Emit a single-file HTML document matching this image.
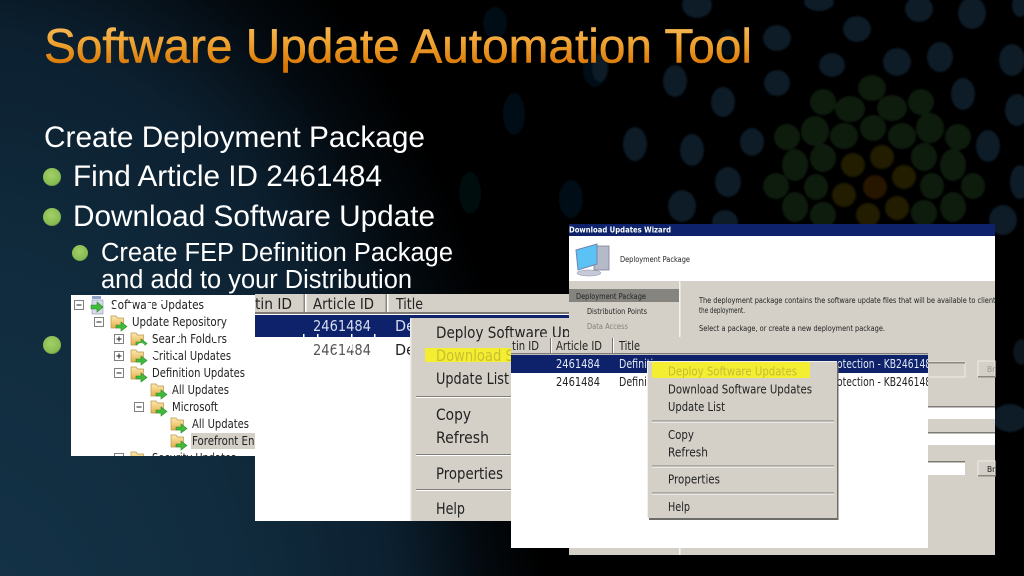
<!DOCTYPE html>
<html><head><meta charset="utf-8"><title>Software Update Automation Tool</title>
<style>
html,body{margin:0;padding:0;background:#000;width:1024px;height:576px;overflow:hidden}
svg{display:block}
.h{font-family:"Liberation Sans",Arial,sans-serif;fill:#fff}
.s{font-family:"DejaVu Sans","Liberation Sans",sans-serif;fill:#222}
</style></head><body>
<svg xmlns="http://www.w3.org/2000/svg" width="1024" height="576" viewBox="0 0 1024 576">
<defs>
<radialGradient id="bg" gradientUnits="userSpaceOnUse" cx="0" cy="0" r="1" gradientTransform="translate(-30 700) scale(580 900)">
<stop offset="0" stop-color="#153449"/><stop offset=".5" stop-color="#102b3d"/><stop offset=".74" stop-color="#0c2030"/><stop offset=".8" stop-color="#091824"/><stop offset=".9" stop-color="#03090e"/><stop offset="1" stop-color="#000"/>
</radialGradient>
<linearGradient id="tg" gradientUnits="userSpaceOnUse" x1="0" y1="24" x2="0" y2="66">
<stop offset="0" stop-color="#f8bb5c"/><stop offset=".5" stop-color="#ee9f2c"/><stop offset="1" stop-color="#d87604"/>
</linearGradient>
<radialGradient id="bl" cx=".45" cy=".4" r=".65"><stop offset="0" stop-color="#a5cf68"/><stop offset=".8" stop-color="#86bb52"/><stop offset="1" stop-color="#5f8c38"/></radialGradient>
<filter id="b1" x="-20%" y="-20%" width="140%" height="140%"><feGaussianBlur stdDeviation="1"/></filter>
<filter id="b0" x="0" y="0" width="100%" height="100%"><feGaussianBlur stdDeviation=".35"/></filter>
<linearGradient id="fo" x1="0" y1="0" x2="0" y2="1"><stop offset="0" stop-color="#fbe9ae"/><stop offset="1" stop-color="#e6b04c"/></linearGradient>
<g id="f">
<path d="M1 3h5l1.500 2h6v10H1z" fill="url(#fo)" stroke="#b9954c" stroke-width=".7"/>
<path d="M6 12h5V9l6 4.500-6 4.500v-3H6z" fill="#3fbb3a" stroke="#2b8a2a" stroke-width=".6"/>
</g>
<g id="m"><rect x="-4.500" y="-4.500" width="9" height="9" fill="#fff" stroke="#808080"/><path d="M-2.500 0h5" stroke="#222"/></g>
<g id="p"><rect x="-4.500" y="-4.500" width="9" height="9" fill="#fff" stroke="#808080"/><path d="M-2.500 0h5M0-2.500v5" stroke="#222"/></g>
</defs>
<rect width="1024" height="576" fill="url(#bg)"/>
<g filter="url(#b1)">
<g fill="#050f16">
<ellipse cx="495" cy="23" rx="12" ry="16"/><ellipse cx="595" cy="70" rx="12" ry="17"/><ellipse cx="514" cy="114" rx="11" ry="21"/><ellipse cx="470" cy="193" rx="11" ry="21" fill="#030a0f"/><ellipse cx="571" cy="199" rx="12" ry="19"/>
<ellipse cx="728" cy="43" rx="10" ry="14"/>
</g>
<g fill="#091a27">
<ellipse cx="697" cy="5" rx="15" ry="13"/><ellipse cx="675" cy="81" rx="12" ry="16"/><ellipse cx="723" cy="102" rx="12" ry="15"/><ellipse cx="777" cy="83" rx="13" ry="13"/><ellipse cx="777" cy="38" rx="14" ry="13"/><ellipse cx="832" cy="65" rx="13" ry="12"/><ellipse cx="857" cy="29" rx="14" ry="13"/><ellipse cx="897" cy="62" rx="14" ry="14"/><ellipse cx="940" cy="57" rx="13" ry="15"/><ellipse cx="919" cy="9" rx="14" ry="13"/><ellipse cx="972" cy="13" rx="14" ry="16"/><ellipse cx="819" cy="2" rx="15" ry="9"/><ellipse cx="1020" cy="5" rx="8" ry="12"/><ellipse cx="1012" cy="60" rx="13" ry="16"/><ellipse cx="963" cy="94" rx="12" ry="16"/><ellipse cx="1017" cy="110" rx="12" ry="16"/><ellipse cx="635" cy="144" rx="12" ry="17"/><ellipse cx="692" cy="150" rx="12" ry="16"/><ellipse cx="752" cy="142" rx="12" ry="14"/><ellipse cx="728" cy="182" rx="13" ry="15"/><ellipse cx="682" cy="206" rx="14" ry="16"/><ellipse cx="725" cy="222" rx="13" ry="12"/><ellipse cx="988" cy="146" rx="12" ry="16"/><ellipse cx="1020" cy="182" rx="10" ry="17"/><ellipse cx="1003" cy="220" rx="14" ry="15"/><ellipse cx="600" cy="68" rx="8" ry="14"/><ellipse cx="1010" cy="418" rx="18" ry="14"/>
</g>
<ellipse cx="1022" cy="352" rx="9" ry="13" fill="#07161a"/>
<g fill="#111b0b">
<ellipse cx="872" cy="88" rx="14" ry="13"/><ellipse cx="823" cy="102" rx="13" ry="13"/><ellipse cx="921" cy="102" rx="13" ry="13"/><ellipse cx="850" cy="109" rx="15" ry="13"/><ellipse cx="892" cy="108" rx="15" ry="13"/><ellipse cx="873" cy="128" rx="13" ry="13"/><ellipse cx="844" cy="136" rx="14" ry="13"/><ellipse cx="902" cy="136" rx="14" ry="13"/><ellipse cx="815" cy="131" rx="14" ry="15"/><ellipse cx="930" cy="128" rx="14" ry="15"/><ellipse cx="787" cy="137" rx="13" ry="13"/><ellipse cx="958" cy="137" rx="13" ry="13"/><ellipse cx="823" cy="158" rx="13" ry="14"/><ellipse cx="924" cy="157" rx="13" ry="14"/><ellipse cx="795" cy="165" rx="13" ry="16"/><ellipse cx="953" cy="165" rx="13" ry="16"/><ellipse cx="776" cy="186" rx="13" ry="13"/><ellipse cx="973" cy="186" rx="12" ry="13"/><ellipse cx="816" cy="187" rx="12" ry="13"/><ellipse cx="932" cy="186" rx="12" ry="13"/><ellipse cx="795" cy="207" rx="13" ry="15"/><ellipse cx="953" cy="207" rx="13" ry="15"/><ellipse cx="823" cy="215" rx="13" ry="13"/><ellipse cx="924" cy="213" rx="13" ry="13"/>
</g>
<g fill="#231b04">
<circle cx="882" cy="157" r="12"/><circle cx="853" cy="165" r="12"/><circle cx="904" cy="177" r="12"/><circle cx="844" cy="195" r="12"/><circle cx="897" cy="208" r="12"/><circle cx="868" cy="215" r="12"/>
</g>
<circle cx="875" cy="187" r="12" fill="#251205"/>
</g>

<text class="h" x="44" y="62.500" font-size="48" textLength="708" lengthAdjust="spacingAndGlyphs" style="fill:url(#tg);stroke:url(#tg);stroke-width:.5">Software Update Automation Tool</text>
<text class="h" x="44" y="147" font-size="30" textLength="381" lengthAdjust="spacingAndGlyphs">Create Deployment Package</text>
<text class="h" x="73" y="186" font-size="30" textLength="309" lengthAdjust="spacingAndGlyphs">Find Article ID 2461484</text>
<text class="h" x="73" y="226" font-size="30" textLength="362" lengthAdjust="spacingAndGlyphs">Download Software Update</text>
<text class="h" x="101" y="261" font-size="25.500" textLength="352" lengthAdjust="spacingAndGlyphs">Create FEP Definition Package</text>
<text class="h" x="101" y="288" font-size="25.500" textLength="311" lengthAdjust="spacingAndGlyphs">and add to your Distribution</text>
<circle cx="52" cy="177" r="9" fill="url(#bl)"/><circle cx="52" cy="217" r="9" fill="url(#bl)"/><circle cx="52" cy="345" r="9" fill="url(#bl)"/><circle cx="80" cy="253" r="8" fill="url(#bl)"/>

<g filter="url(#b0)">
<!-- list 1 -->
<rect x="255" y="294" width="314" height="227" fill="#fff"/>
<rect x="255" y="294" width="314" height="18" fill="#d4d0c8"/>
<rect x="255" y="312" width="314" height="2" fill="#7d7a74"/>
<rect x="305" y="294" width="1.500" height="18" fill="#fff"/><rect x="303.500" y="294" width="1.500" height="18" fill="#8a8780"/>
<rect x="387" y="294" width="1.500" height="18" fill="#fff"/><rect x="385.500" y="294" width="1.500" height="18" fill="#8a8780"/>
<rect x="255" y="315" width="314" height="22" fill="#0a246a"/>
<text class="s" x="255" y="309" font-size="15" textLength="37" lengthAdjust="spacingAndGlyphs">tin ID</text>
<text class="s" x="313" y="309" font-size="15" textLength="61" lengthAdjust="spacingAndGlyphs">Article ID</text>
<text class="s" x="396" y="309" font-size="15" textLength="27" lengthAdjust="spacingAndGlyphs">Title</text>
<text class="s" x="313" y="331" font-size="15" textLength="58" lengthAdjust="spacingAndGlyphs" style="fill:#d6dcf0">2461484</text>
<text class="s" x="395" y="331" font-size="15" textLength="20" lengthAdjust="spacingAndGlyphs" style="fill:#d6dcf0">De</text>
<text class="s" x="313" y="355" font-size="15" textLength="58" lengthAdjust="spacingAndGlyphs" style="fill:#555">2461484</text>
<text class="s" x="395" y="355" font-size="15" textLength="20" lengthAdjust="spacingAndGlyphs">De</text>
<rect x="320" y="343" width="2" height="5" fill="#fff"/><rect x="335" y="349" width="3" height="3" fill="#fff"/><rect x="350" y="344" width="2" height="6" fill="#fff"/>
<rect x="303" y="334" width="1.500" height="4" fill="#fff"/><rect x="317" y="334" width="1.500" height="4" fill="#fff"/><rect x="351" y="334" width="1.500" height="4" fill="#fff"/><rect x="374" y="334" width="1.500" height="4" fill="#fff"/>
<!-- menu 1 -->
<rect x="410" y="318" width="159" height="203" fill="#d4d0c8"/>
<rect x="410" y="318" width="1.500" height="203" fill="#eeece8"/>
<rect x="425" y="348" width="90" height="14" fill="#f4ee30"/>
<text class="s" x="436" y="338" font-size="16" textLength="172" lengthAdjust="spacingAndGlyphs">Deploy Software Updates</text>
<text class="s" x="436" y="361" font-size="16" textLength="186" lengthAdjust="spacingAndGlyphs" style="fill:#c9bf30">Download Software Updates</text>
<text class="s" x="436" y="384" font-size="16" textLength="73" lengthAdjust="spacingAndGlyphs">Update List</text>
<rect x="416" y="396" width="153" height="1" fill="#807d77"/><rect x="416" y="397" width="153" height="1" fill="#fff"/>
<text class="s" x="436" y="420" font-size="16" textLength="35" lengthAdjust="spacingAndGlyphs">Copy</text>
<text class="s" x="436" y="443" font-size="16" textLength="53" lengthAdjust="spacingAndGlyphs">Refresh</text>
<rect x="416" y="454" width="153" height="1" fill="#807d77"/><rect x="416" y="455" width="153" height="1" fill="#fff"/>
<text class="s" x="436" y="479" font-size="16" textLength="67" lengthAdjust="spacingAndGlyphs">Properties</text>
<rect x="416" y="489" width="153" height="1" fill="#807d77"/><rect x="416" y="490" width="153" height="1" fill="#fff"/>
<text class="s" x="436" y="514" font-size="16" textLength="29" lengthAdjust="spacingAndGlyphs">Help</text>

<!-- tree -->
<rect x="71" y="295" width="184" height="161" fill="#fff"/>
<svg x="71" y="295" width="184" height="161" viewBox="71 295 184 161">
<use href="#m" x="79" y="305"/><use href="#m" x="99" y="322"/><use href="#p" x="119" y="339"/><use href="#p" x="119" y="356"/><use href="#m" x="119" y="373"/><use href="#m" x="139" y="407"/><use href="#m" x="119" y="458"/>
<rect x="92" y="296" width="9" height="3" fill="#8fa4c8"/><rect x="92" y="300" width="11" height="14" fill="#d8dcea" stroke="#8a94b0" stroke-width=".6"/>
<path d="M91 305h6v-3l6 5-6 5v-3h-6z" fill="#3fbb3a" stroke="#2b8a2a" stroke-width=".6"/>
<use href="#f" x="110" y="313"/><use href="#f" x="130" y="330"/><use href="#f" x="130" y="347"/><use href="#f" x="130" y="364"/><use href="#f" x="150" y="381"/><use href="#f" x="150" y="398"/><use href="#f" x="170" y="415"/><use href="#f" x="170" y="432"/><use href="#f" x="130" y="449"/>
<rect x="191" y="433" width="64" height="16" fill="#d4d0c8"/>
<g font-size="12">
<text class="s" x="111" y="309" textLength="93" lengthAdjust="spacingAndGlyphs">Software Updates</text>
<text class="s" x="132" y="326" textLength="95" lengthAdjust="spacingAndGlyphs">Update Repository</text>
<text class="s" x="152" y="343" textLength="75" lengthAdjust="spacingAndGlyphs">Search Folders</text>
<text class="s" x="152" y="360" textLength="79" lengthAdjust="spacingAndGlyphs">Critical Updates</text>
<text class="s" x="152" y="377" textLength="93" lengthAdjust="spacingAndGlyphs">Definition Updates</text>
<text class="s" x="172" y="394" textLength="57" lengthAdjust="spacingAndGlyphs">All Updates</text>
<text class="s" x="172" y="411" textLength="46" lengthAdjust="spacingAndGlyphs">Microsoft</text>
<text class="s" x="192" y="428" textLength="57" lengthAdjust="spacingAndGlyphs">All Updates</text>
<text class="s" x="192" y="445" textLength="95" lengthAdjust="spacingAndGlyphs">Forefront Endpoint</text>
<text class="s" x="152" y="462" textLength="84" lengthAdjust="spacingAndGlyphs">Security Updates</text>
</g>
<rect x="114" y="302" width="3" height="6" fill="#fff"/><rect x="128" y="303" width="5" height="6" fill="#fff"/><rect x="146" y="303" width="6" height="6" fill="#fff"/><rect x="160" y="301" width="5" height="3" fill="#fff"/>
<rect x="175" y="336" width="4" height="6" fill="#fff"/><rect x="213" y="336" width="5" height="6" fill="#fff"/><rect x="152" y="352" width="4" height="5" fill="#fff"/><rect x="172" y="351" width="3" height="5" fill="#fff"/>
<circle cx="141" cy="347" r="4" fill="#fff"/>
</svg>

<!-- wizard -->
<rect x="569" y="224" width="426" height="331" fill="#d4d0c8"/>
<rect x="569" y="224" width="426" height="12" fill="#0a246a"/>
<rect x="569" y="236" width="426" height="45" fill="#fff"/>
<rect x="679" y="281" width="1.500" height="274" fill="#f4f3f0"/>
<rect x="569" y="289" width="110" height="13" fill="#86847f"/>
<text class="s" x="569" y="232.500" font-size="8" font-weight="bold" textLength="102" lengthAdjust="spacingAndGlyphs" style="fill:#fff">Download Updates Wizard</text>
<g>
<rect x="594" y="246" width="15" height="24" fill="#b4bac8" stroke="#7c8294" stroke-width=".8"/>
<path d="M576 250l21-6v20l-19 6z" fill="#5cc2f5" stroke="#6f86ad"/>
<ellipse cx="589" cy="273" rx="12" ry="3" fill="#c6cad8" stroke="#8a90a6" stroke-width=".5"/>
</g>
<text class="s" x="620" y="262" font-size="8" textLength="70" lengthAdjust="spacingAndGlyphs">Deployment Package</text>
<text class="s" x="576" y="299" font-size="8" textLength="70" lengthAdjust="spacingAndGlyphs">Deployment Package</text>
<text class="s" x="587" y="314" font-size="8" textLength="60" lengthAdjust="spacingAndGlyphs">Distribution Points</text>
<text class="s" x="587" y="329" font-size="8" textLength="41" lengthAdjust="spacingAndGlyphs" style="fill:#80807a">Data Access</text>
<svg x="699" y="295" width="296" height="40" viewBox="699 295 296 40">
<text class="s" x="699" y="303" font-size="8" textLength="300" lengthAdjust="spacingAndGlyphs">The deployment package contains the software update files that will be available to clients</text>
<text class="s" x="699" y="313" font-size="8" textLength="46" lengthAdjust="spacingAndGlyphs">the deployment.</text>
<text class="s" x="699" y="331" font-size="8" textLength="186" lengthAdjust="spacingAndGlyphs">Select a package, or create a new deployment package.</text>
</svg>
<rect x="928" y="362" width="37" height="15" fill="#d4d0c8" stroke="#eeece8"/><rect x="928" y="362" width="37" height="1.500" fill="#8a8780"/>
<rect x="978" y="361" width="17" height="16" fill="#d4d0c8" stroke="#eeece8"/><rect x="978" y="376" width="17" height="1.500" fill="#8a8780"/>
<text class="s" x="987" y="372" font-size="7.500" style="fill:#9a9890">Br</text>
<rect x="928" y="407" width="67" height="12" fill="#fff"/><rect x="928" y="406" width="67" height="1.500" fill="#7d7a74"/>
<rect x="928" y="433" width="67" height="12" fill="#fff"/><rect x="928" y="432" width="67" height="1.500" fill="#7d7a74"/>
<rect x="928" y="462" width="37" height="13" fill="#fff"/><rect x="928" y="461" width="37" height="1.500" fill="#7d7a74"/>
<rect x="978" y="461" width="17" height="15" fill="#d4d0c8" stroke="#eeece8"/><rect x="978" y="475" width="17" height="1.500" fill="#8a8780"/>
<text class="s" x="987" y="472" font-size="7.500">Br</text>

<!-- list 2 -->
<rect x="511" y="337" width="417" height="211" fill="#fff"/>
<rect x="511" y="337" width="417" height="16" fill="#d4d0c8"/>
<rect x="511" y="353" width="417" height="1.500" fill="#7d7a74"/>
<rect x="550" y="338" width="1" height="15" fill="#76736d"/><rect x="551" y="338" width="1" height="15" fill="#fff"/>
<rect x="612" y="338" width="1" height="15" fill="#76736d"/><rect x="613" y="338" width="1" height="15" fill="#fff"/>
<text class="s" x="512" y="350" font-size="12" textLength="27" lengthAdjust="spacingAndGlyphs">tin ID</text>
<text class="s" x="556" y="350" font-size="12" textLength="46" lengthAdjust="spacingAndGlyphs">Article ID</text>
<text class="s" x="619" y="350" font-size="12" textLength="21" lengthAdjust="spacingAndGlyphs">Title</text>
<rect x="511" y="355" width="417" height="18" fill="#0a246a"/>
<text class="s" x="556" y="368" font-size="12" textLength="44" lengthAdjust="spacingAndGlyphs" style="fill:#e4e8f6">2461484</text>
<text class="s" x="619" y="368" font-size="12" textLength="46" lengthAdjust="spacingAndGlyphs" style="fill:#e4e8f6">Definition</text>
<text class="s" x="556" y="386" font-size="12" textLength="44" lengthAdjust="spacingAndGlyphs">2461484</text>
<text class="s" x="619" y="386" font-size="12" textLength="46" lengthAdjust="spacingAndGlyphs">Definition</text>
<svg x="837" y="355" width="91" height="40" viewBox="837 355 91 40">
<text class="s" x="837" y="368" font-size="12" textLength="100" lengthAdjust="spacingAndGlyphs" style="fill:#e4e8f6">otection - KB2461484</text>
<text class="s" x="837" y="386" font-size="12" textLength="100" lengthAdjust="spacingAndGlyphs">otection - KB2461484</text>
</svg>
<!-- menu 2 -->
<rect x="649" y="363" width="189.500" height="157" fill="#6e6c68"/>
<rect x="647" y="361" width="190" height="157" fill="#d4d0c8"/>
<rect x="647" y="361" width="190" height="1" fill="#f2f1ee"/>
<rect x="647" y="361" width="1" height="157" fill="#f2f1ee"/>
<rect x="652" y="362" width="158" height="16" fill="#f4ee30"/>
<g font-size="12">
<text class="s" x="668" y="375.500" textLength="129" lengthAdjust="spacingAndGlyphs" style="fill:#c4bc36">Deploy Software Updates</text>
<text class="s" x="668" y="393.500" textLength="144" lengthAdjust="spacingAndGlyphs">Download Software Updates</text>
<text class="s" x="668" y="411" textLength="57" lengthAdjust="spacingAndGlyphs">Update List</text>
<text class="s" x="668" y="439" textLength="26" lengthAdjust="spacingAndGlyphs">Copy</text>
<text class="s" x="668" y="456.500" textLength="40" lengthAdjust="spacingAndGlyphs">Refresh</text>
<text class="s" x="668" y="483.500" textLength="52" lengthAdjust="spacingAndGlyphs">Properties</text>
<text class="s" x="668" y="511" textLength="22" lengthAdjust="spacingAndGlyphs">Help</text>
</g>
<rect x="652" y="420.500" width="182" height="1" fill="#807d77"/><rect x="652" y="421.500" width="182" height="1" fill="#fff"/>
<rect x="652" y="465.500" width="182" height="1" fill="#807d77"/><rect x="652" y="466.500" width="182" height="1" fill="#fff"/>
<rect x="652" y="492.500" width="182" height="1" fill="#807d77"/><rect x="652" y="493.500" width="182" height="1" fill="#fff"/>
</g>
</svg>
</body></html>
